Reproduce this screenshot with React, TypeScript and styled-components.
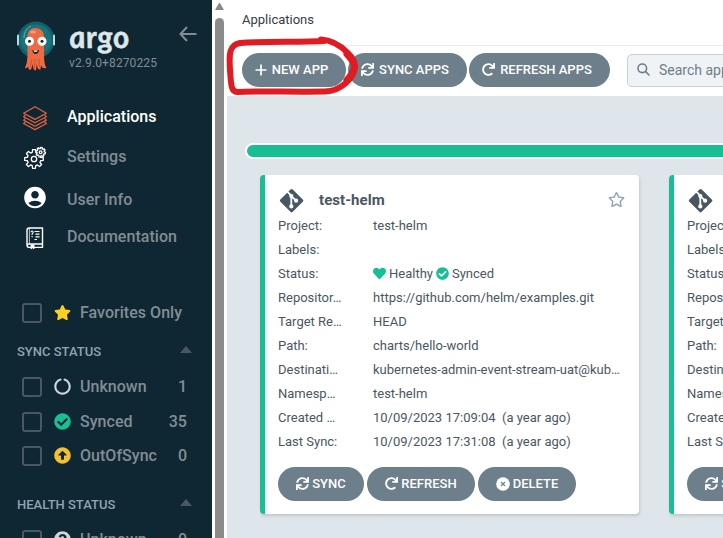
import React from 'react';
import styled, { createGlobalStyle } from 'styled-components';
import {
  FaArrowAltCircleUp,
  FaCheckCircle,
  FaCircleNotch,
  FaHeart,
  FaQuestionCircle,
  FaRedo,
  FaRegStar,
  FaStar,
  FaSync,
} from 'react-icons/fa';
import { MdAccountCircle } from 'react-icons/md';

const GlobalStyle = createGlobalStyle`
  *, *::before, *::after { box-sizing: border-box; }
  body { margin: 0; overflow: hidden; background: #fff; font-family: Roboto, sans-serif; }
`;

const Page = styled.div`
  position: relative;
  display: flex;
  width: 723px;
  height: 538px;
  overflow: hidden;
`;

const Sidebar = styled.aside`
  flex: none;
  width: 212px;
  height: 538px;
  overflow: hidden;
  background: #0f2733;
`;

const Brand = styled.div`
  display: flex;
  height: 97px;
  padding: 20px 0 0 16px;
`;

const BrandText = styled.div`
  width: 110px;
  margin-left: 13px;
`;

const Wordmark = styled.div`
  width: max-content;
  height: 34px;
  font: italic 700 31px/33px Lato, sans-serif;
  letter-spacing: 0.5px;
  color: #dee6e8;
  -webkit-text-stroke: 0.5px #dee6e8;
  transform: skewX(8deg);
`;

const Version = styled.div`
  font-size: 12px;
  line-height: 18px;
  letter-spacing: 0.12px;
  color: #818d94;
`;

const BackButton = styled.div`
  margin: 6px 0 0;
  svg { display: block; }
`;

const NavItem = styled.div<{ $active?: boolean; $height: number }>`
  display: flex;
  align-items: center;
  height: ${(p) => p.$height}px;
  padding-left: 22px;
  font-size: 16px;
  font-weight: 500;
  line-height: 18px;
  letter-spacing: 0.03px;
  color: ${(p) => (p.$active ? '#fff' : '#818d94')};
`;

const NavIcon = styled.span<{ $raise?: number }>`
  display: flex;
  justify-content: center;
  width: 26px;
  margin-right: 19px;
  padding-bottom: ${(p) => p.$raise ?? 0}px;
  color: #fff;
`;

const NavLabel = styled.span<{ $lower?: boolean }>`
  padding: ${(p) => (p.$lower ? '2px 0 0' : '0 0 2px')};
`;

const FilterRow = styled.div<{ $first?: boolean }>`
  display: flex;
  align-items: center;
  height: ${(p) => (p.$first ? 40 : 34.5)}px;
  margin-top: ${(p) => (p.$first ? 39 : 0)}px;
  padding: 0 25px 0 22px;
  font-size: 16px;
  font-weight: 500;
  line-height: 18px;
  letter-spacing: 0.03px;
  color: #818d94;
`;

const Checkbox = styled.span`
  width: 20px;
  height: 20px;
  border: 2px solid #495763;
  border-radius: 3px;
`;

const FilterIcon = styled.span<{ $color: string }>`
  display: flex;
  margin: 0 9px 1px 12px;
  color: ${(p) => p.$color};
`;

const Count = styled.span`
  margin-left: auto;
`;

const SectionTitle = styled.div<{ $gap?: number }>`
  display: flex;
  align-items: center;
  justify-content: space-between;
  height: 37px;
  margin-top: ${(p) => p.$gap ?? 0}px;
  padding: 0 20px 0 17px;
  font-size: 13px;
  font-weight: 500;
  color: #8fa4b1;
`;

const Caret = styled.span`
  width: 0;
  border: 6px solid transparent;
  border-top: 0;
  border-bottom: 7px solid #495763;
  margin-top: -4px;
`;

const Scrollbar = styled.div`
  flex: none;
  width: 15px;
  padding: 3px 3px 0;
  background: #fff;
`;

const ScrollArrow = styled.div`
  width: 9px;
  border: 4.5px solid transparent;
  border-top: 0;
  border-bottom: 7px solid #8b8b8b;
`;

const Thumb = styled.div`
  width: 9px;
  height: 540px;
  margin-top: 8px;
  border-radius: 5px;
  background: #8b8b8b;
`;

const Main = styled.main`
  flex: none;
  width: 760px;
  height: 538px;
  background: #dee5eb;
`;

const Header = styled.header`
  height: 46px;
  padding: 10px 0 0 15px;
  background: #fff;
  border-bottom: 1px solid #e9eef1;
  font-size: 13px;
  line-height: 20px;
  color: #363c4a;
`;

const Toolbar = styled.div`
  display: flex;
  height: 50px;
  padding: 7px 0 0 15px;
  gap: 2px;
  background: #fff;
`;

const Pill = styled.button<{ $width: number; $toolbar?: boolean }>`
  display: flex;
  align-items: center;
  justify-content: center;
  gap: ${(p) => (p.$toolbar ? 5 : 3)}px;
  flex: none;
  width: ${(p) => p.$width}px;
  height: 34px;
  padding: 0 ${(p) => (p.$toolbar ? 5 : 0)}px 1px 0;
  border: 0;
  border-radius: 17px;
  background: #6d7f8b;
  color: #fff;
  font: 500 13px/16px Roboto, sans-serif;
`;

const SearchBox = styled.div`
  display: flex;
  align-items: center;
  gap: 9px;
  width: 200px;
  height: 33px;
  margin: 1px 0 0 15px;
  padding: 0 0 2px 9px;
  border: 1px solid #c5d0d7;
  border-radius: 5px;
  background: #eff3f5;
  font-size: 14px;
  color: #6d7f8b;
`;

const HealthBar = styled.div`
  height: 16px;
  margin: 47px 0 16px 18px;
  border: 2px solid #fff;
  border-radius: 8px;
  background: #18be94;
`;

const Cards = styled.div`
  display: flex;
  gap: 30px;
  padding-left: 33px;
`;

const Card = styled.article`
  flex: none;
  width: 379px;
  height: 339px;
  padding: 12px 14px 0 13px;
  border-left: 5px solid #18be94;
  border-radius: 4px;
  background: #fff;
  box-shadow: 1px 2px 3px rgba(100, 115, 130, 0.25);
  color: #495763;
`;

const CardHead = styled.div`
  display: flex;
  align-items: center;
  height: 26px;
  svg { flex: none; }
`;

const CardTitle = styled.h2`
  flex: 1;
  margin: 0 0 0 14px;
  font-size: 15px;
  font-weight: 700;
  letter-spacing: 0.05px;
`;

const Star = styled.span`
  display: flex;
  padding-bottom: 2px;
`;

const Field = styled.div`
  display: flex;
  align-items: center;
  height: 24px;
  font-size: 13px;
`;

const Label = styled.span`
  flex: none;
  width: 95px;
`;

const Value = styled.span`
  display: flex;
  align-items: center;
  white-space: pre;
`;

const StatusIcon = styled.span<{ $first?: boolean }>`
  display: flex;
  margin: 0 3px 0 ${(p) => (p.$first ? 0 : 3)}px;
  color: #18be94;
`;

const Actions = styled.div`
  display: flex;
  gap: 3px;
  margin-top: 14px;
`;

const Highlight = styled.svg`
  position: absolute;
  left: 225px;
  top: 34px;
  pointer-events: none;
`;

const Mascot = () => (
  <svg width="40" height="52" viewBox="0 0 40 52">
    <circle cx="20" cy="20" r="18.5" fill="#155f68" />
    <circle cx="20" cy="20" r="15.5" fill="#18747b" />
    <path d="M8 18C8 11 12 7 15 6" fill="none" stroke="#6dabb0" strokeWidth="1" />
    <rect x="1" y="14.5" width="2" height="11" rx="1" fill="#b9d8e5" />
    <rect x="37" y="14.5" width="2" height="11" rx="1" fill="#b9d8e5" />
    <path d="M11.5 17C11.5 11 15 8 19.5 8S28 11 28 17L28 32C28 40 28.5 45 30.5 48Q26 49 25 45L24.5 49.5Q21 50 20.8 44L20 50.5Q16.5 50.5 17 44L15 49.5Q12 50.5 12.5 46.5Q10 49.5 9 47.5Q11.5 43 11.5 34Z" fill="#ee6a42" />
    <path d="M16 39L14.5 47M19 39L18.5 48M23 39L23.5 47" stroke="#c94e35" strokeWidth=".9" />
    <ellipse cx="17" cy="12" rx="3" ry="1.5" fill="#f59a7c" />
    <circle cx="13.5" cy="21.3" r="4.5" fill="#fff" />
    <circle cx="26" cy="21.3" r="4.5" fill="#fff" />
    <circle cx="13.5" cy="21.3" r="1.5" fill="#102530" />
    <circle cx="26" cy="21.3" r="1.5" fill="#102530" />
    <path d="M16.2 30Q19.5 31 23 30Q22.5 34 19.6 34Q17 34 16.2 30Z" fill="#102530" />
    <path d="M17.5 30.5L21.5 30.5L21 31.7H18Z" fill="#fff" />
  </svg>
);

const LayersIcon = () => (
  <svg width="26" height="26" viewBox="0 0 26 26" fill="none" stroke="#e4633f" strokeWidth="1.2" strokeLinejoin="round">
    <path d="M13 1.7L24.4 8.3L13 14.4L1.6 8.3Z" />
    <path d="M3.5 10L1.6 11.7L13 17.8L24.4 11.7L22.5 10" />
    <path d="M3.5 13.4L1.6 15.1L13 21.2L24.4 15.1L22.5 13.4" />
    <path d="M3.5 16.8L1.6 18.5L13 24.6L24.4 18.5L22.5 16.8" />
  </svg>
);

function gearPath(cx: number, cy: number, outer: number, inner: number, teeth: number, phase: number) {
  const points: string[] = [];
  for (let i = 0; i < teeth; i++) {
    [[-0.33, inner], [-0.2, outer], [0.2, outer], [0.33, inner]].forEach(([offset, r]) => {
      const angle = ((i + offset) / teeth) * Math.PI * 2 + phase;
      points.push(`${(cx + Math.cos(angle) * r).toFixed(2)} ${(cy + Math.sin(angle) * r).toFixed(2)}`);
    });
  }
  return `M${points.join('L')}Z`;
}

const GearsIcon = () => (
  <svg width="24" height="24" viewBox="0 0 24 24" fill="none" stroke="#fff" strokeWidth="1.3" strokeLinejoin="round">
    <path d={gearPath(11, 13, 9.4, 6.8, 8, 0)} />
    <circle cx="11" cy="13" r="2.7" />
    <path d={gearPath(17.6, 6.2, 4.9, 3.7, 8, 0.2)} fill="#0f2733" />
    <circle cx="17.6" cy="6.2" r="1.4" />
  </svg>
);

const BookIcon = () => (
  <svg width="20" height="24" viewBox="0 0 20 24" fill="none" stroke="#fff" strokeWidth="1.4">
    <path d="M17.5 18V2H4.2Q2 2 2 4.2V19Q2 21.4 4.2 21.4H17.5V18H4.2Q2 18 2 20" strokeLinejoin="round" />
    <path d="M4.4 2V18" strokeWidth=".7" />
    <path d="M9.5 5.5H14.5M10.5 8.2H14.5M10.5 10.9H14.5M9.5 13.5H12" strokeWidth="1.2" />
    <path d="M6 6.3Q6 5 7.1 5T8.2 6.3Q8.2 7.2 7.1 7.9V8.9M7.1 10V11.2" strokeWidth="1.1" />
    <path d="M6 18.5V23L7.5 21.8L9 23V18.5" fill="#fff" strokeWidth=".8" />
  </svg>
);

const GitIcon = () => (
  <svg width="27" height="26" viewBox="0 0 27 26">
    <rect x="4.9" y="5" width="17.4" height="17.4" rx="1.6" fill="#495763" transform="rotate(45 13.6 13.7)" />
    <g fill="none" stroke="#fff" strokeWidth="1.8">
      <path d="M9.3 4.6L13.3 8.7V19.8M13.3 9.1L18.1 13.6" />
    </g>
    <g fill="#fff">
      <circle cx="13.3" cy="9.1" r="2.1" />
      <circle cx="18.1" cy="13.7" r="2.1" />
      <circle cx="13.3" cy="19.4" r="2.1" />
    </g>
  </svg>
);

const DeleteIcon = () => (
  <svg width="14" height="14" viewBox="0 0 14 14">
    <circle cx="7" cy="7" r="6.8" fill="#fff" />
    <path d="M5 5L9 9M9 5L5 9" stroke="#6d7f8b" strokeWidth="1.1" />
  </svg>
);

const PlusIcon = () => (
  <svg width="12" height="12" viewBox="0 0 12 12" stroke="#fff" strokeWidth="1.7">
    <path d="M6 .5V11.5M.5 6H11.5" />
  </svg>
);

const SearchIcon = () => (
  <svg width="13" height="13" viewBox="0 0 13 13" fill="none" stroke="#6d7f8b" strokeWidth="1.6" strokeLinecap="round">
    <circle cx="5.3" cy="5.3" r="4.3" />
    <path d="M8.6 8.6L12 12" />
  </svg>
);

const fields: [string, string][] = [
  ['Project:', 'test-helm'],
  ['Labels:', ''],
  ['Status:', 'status'],
  ['Repositor…', 'https://github.com/helm/examples.git'],
  ['Target Re…', 'HEAD'],
  ['Path:', 'charts/hello-world'],
  ['Destinati…', 'kubernetes-admin-event-stream-uat@kub…'],
  ['Namesp…', 'test-helm'],
  ['Created …', '10/09/2023 17:09:04  (a year ago)'],
  ['Last Sync:', '10/09/2023 17:31:08  (a year ago)'],
];

const AppCard = () => (
  <Card>
    <CardHead>
      <GitIcon />
      <CardTitle>test-helm</CardTitle>
      <Star><FaRegStar size={17} color="#8fa4b1" /></Star>
    </CardHead>
    {fields.map(([label, value]) => (
      <Field key={label}>
        <Label>{label}</Label>
        {value === 'status' ? (
          <Value>
            <StatusIcon $first><FaHeart size={13} /></StatusIcon>Healthy
            <StatusIcon><FaCheckCircle size={13} /></StatusIcon>Synced
          </Value>
        ) : (
          <Value>{value}</Value>
        )}
      </Field>
    ))}
    <Actions>
      <Pill $width={86}><FaSync size={13} />SYNC</Pill>
      <Pill $width={108}><FaRedo size={13} />REFRESH</Pill>
      <Pill $width={98}><DeleteIcon />DELETE</Pill>
    </Actions>
  </Card>
);

export default function App() {
  return (
    <Page>
      <GlobalStyle />
      <Sidebar>
        <Brand>
          <Mascot />
          <BrandText>
            <Wordmark>argo</Wordmark>
            <Version>v2.9.0+8270225</Version>
          </BrandText>
          <BackButton>
            <svg width="18" height="16" viewBox="0 0 18 16" fill="none" stroke="#818d94" strokeWidth="2">
              <path d="M17.5 8H1.5M8 1L1.5 8L8 15" />
            </svg>
          </BackButton>
        </Brand>
        <NavItem $active $height={41}><NavIcon><LayersIcon /></NavIcon><NavLabel>Applications</NavLabel></NavItem>
        <NavItem $height={39}><NavIcon><GearsIcon /></NavIcon><NavLabel>Settings</NavLabel></NavItem>
        <NavItem $height={44}><NavIcon $raise={4}><MdAccountCircle size={27} /></NavIcon><NavLabel $lower>User Info</NavLabel></NavItem>
        <NavItem $height={33}><NavIcon><BookIcon /></NavIcon><NavLabel>Documentation</NavLabel></NavItem>
        <FilterRow $first><Checkbox /><FilterIcon $color="#fdd020"><FaStar size={17} /></FilterIcon>Favorites Only</FilterRow>
        <SectionTitle>SYNC STATUS<Caret /></SectionTitle>
        <FilterRow><Checkbox /><FilterIcon $color="#ccd6dd"><FaCircleNotch size={17} /></FilterIcon>Unknown<Count>1</Count></FilterRow>
        <FilterRow><Checkbox /><FilterIcon $color="#18be94"><FaCheckCircle size={17} /></FilterIcon>Synced<Count>35</Count></FilterRow>
        <FilterRow><Checkbox /><FilterIcon $color="#f4c030"><FaArrowAltCircleUp size={17} /></FilterIcon>OutOfSync<Count>0</Count></FilterRow>
        <SectionTitle $gap={12.5}>HEALTH STATUS<Caret /></SectionTitle>
        <FilterRow><Checkbox /><FilterIcon $color="#ccd6dd"><FaQuestionCircle size={17} /></FilterIcon>Unknown<Count>0</Count></FilterRow>
      </Sidebar>
      <Scrollbar>
        <ScrollArrow />
        <Thumb />
      </Scrollbar>
      <Main>
        <Header>Applications</Header>
        <Toolbar>
          <Pill $toolbar $width={104}><PlusIcon />NEW APP</Pill>
          <Pill $toolbar $width={119}><FaSync size={13} />SYNC APPS</Pill>
          <Pill $toolbar $width={141}><FaRedo size={13} />REFRESH APPS</Pill>
          <SearchBox><SearchIcon />Search applications...</SearchBox>
        </Toolbar>
        <HealthBar />
        <Cards>
          <AppCard />
          <AppCard />
        </Cards>
      </Main>
      <Highlight width="136" height="64" viewBox="225 34 136 64" fill="none" stroke="#e11b22" strokeWidth="6" strokeLinecap="round" strokeLinejoin="round">
        <path d="M321 39.5C331 40 340 45 348 53C353 58 355.5 62 355 67C354 78 341 91 325 91.5C290 92 260 91 237 92C231 92 231 84 230 70C229 54 229 45 240 43C270 41 300 42.5 324 41" />
        <path d="M347 54C357 64 356 70 347 80" strokeWidth="7" />
      </Highlight>
    </Page>
  );
}
